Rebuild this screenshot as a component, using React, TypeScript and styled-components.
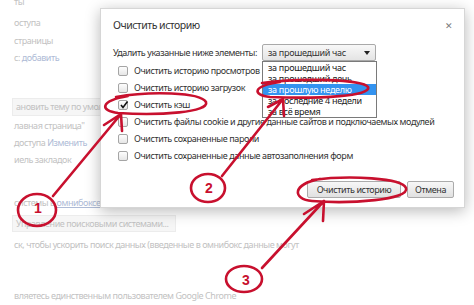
import styled, { createGlobalStyle } from "styled-components";

const GlobalStyle = createGlobalStyle`
  html, body {
    margin: 0;
    padding: 0;
    background: #fff;
    overflow: hidden;
  }
  body {
    font-family: "Noto Sans", "Open Sans", sans-serif;
  }
`;

const RED = "#c8102e";

const Page = styled.div`
  position: relative;
  width: 474px;
  height: 305px;
  overflow: hidden;
  background: #fff;
`;

const Settings = styled.div`
  display: flex;
  flex-direction: column;
  padding-left: 14px;
  font-size: 9px;
  letter-spacing: -0.45px;
  color: #c2c2c2;
  white-space: nowrap;
`;

const Line = styled.div<{ $top: number }>`
  height: 14px;
  line-height: 14px;
  margin-top: ${(p) => p.$top}px;
`;

const Link = styled.span<{ $underline?: boolean }>`
  color: #aebbd6;
  text-decoration: ${(p) => (p.$underline ? "underline" : "none")};
`;

const GhostButton = styled.div<{ $top: number; $width: number; $height: number }>`
  margin-top: ${(p) => p.$top}px;
  margin-left: -2px;
  width: ${(p) => p.$width}px;
  height: ${(p) => p.$height}px;
  line-height: ${(p) => p.$height - 2}px;
  padding-left: 3px;
  box-sizing: border-box;
  background: #f6f6f6;
  border: 1px solid #ececec;
`;

const Dialog = styled.div`
  position: absolute;
  left: 100px;
  top: 8px;
  width: 365px;
  height: 200px;
  box-sizing: border-box;
  background: #fff;
  border: 1px solid #d6d6d6;
  box-shadow: 0 3px 14px rgba(0, 0, 0, 0.28);
  padding: 7px 10px 9px 12px;
  display: flex;
  flex-direction: column;
  color: #333;
  letter-spacing: -0.4px;
`;

const Header = styled.div`
  display: flex;
  justify-content: space-between;
  align-items: center;
  height: 18px;
`;

const Title = styled.div`
  font-size: 10.5px;
  letter-spacing: -0.5px;
  color: #333;
`;

const Close = styled.div`
  font-size: 9px;
  color: #7a7a7a;
  margin-right: 1px;
`;

const RangeRow = styled.div`
  display: flex;
  align-items: center;
  margin-top: 10px;
  font-size: 9px;
  gap: 5px;
`;

const SelectWrap = styled.div`
  position: relative;
`;

const Select = styled.div`
  width: 114px;
  height: 17px;
  box-sizing: border-box;
  border: 1px solid #a9a9a9;
  border-radius: 2px;
  background: linear-gradient(#f8f8f8, #e4e4e4);
  display: flex;
  align-items: center;
  justify-content: space-between;
  padding: 0 5px;
  font-size: 9px;
  letter-spacing: -0.3px;
`;

const Caret = styled.span`
  width: 0;
  height: 0;
  border-left: 3.5px solid transparent;
  border-right: 3.5px solid transparent;
  border-top: 4px solid #222;
`;

const Menu = styled.div`
  position: absolute;
  left: 0;
  top: 17px;
  width: 115px;
  box-sizing: border-box;
  border: 1px solid #7a7a7a;
  background: #fff;
  z-index: 2;
`;

const MenuItem = styled.div<{ $active?: boolean }>`
  height: 11px;
  line-height: 11px;
  padding-left: 5px;
  font-size: 9px;
  letter-spacing: -0.3px;
  color: ${(p) => (p.$active ? "#fff" : "#222")};
  background: ${(p) => (p.$active ? "#3393f0" : "transparent")};
`;

const Options = styled.div`
  display: flex;
  flex-direction: column;
  margin-top: 1px;
  margin-left: 5px;
`;

const Option = styled.div`
  display: flex;
  align-items: center;
  height: 17px;
  gap: 6px;
  font-size: 9px;
  white-space: nowrap;
`;

const Box = styled.span`
  position: relative;
  flex: none;
  width: 10px;
  height: 10px;
  box-sizing: border-box;
  border: 1px solid #a5a5a5;
  border-radius: 2px;
  background: linear-gradient(#fdfdfd, #e6e6e6);
`;

const Tick = styled.svg`
  position: absolute;
  left: 0;
  top: -1px;
`;

const Footer = styled.div`
  margin-top: auto;
  display: flex;
  justify-content: flex-end;
  gap: 6px;
`;

const Button = styled.div<{ $width: number }>`
  width: ${(p) => p.$width}px;
  height: 17px;
  box-sizing: border-box;
  border: 1px solid #ababab;
  border-radius: 2px;
  background: linear-gradient(#f7f7f7, #e1e1e1);
  font-size: 9px;
  display: flex;
  align-items: center;
  justify-content: center;
  color: #333;
`;

const Marks = styled.svg`
  position: absolute;
  inset: 0;
  pointer-events: none;
  z-index: 5;
`;

const options = [
  "Очистить историю просмотров",
  "Очистить историю загрузок",
  "Очистить кэш",
  "Очистить файлы cookie и другие данные сайтов и подключаемых модулей",
  "Очистить сохраненные пароли",
  "Очистить сохраненные данные автозаполнения форм",
];

const ranges = [
  "за прошедший час",
  "за прошедший день",
  "за прошлую неделю",
  "за последние 4 недели",
  "за всё время",
];

function Annotations() {
  const s = {
    fill: "none",
    stroke: RED,
    strokeWidth: 2.6,
    strokeLinecap: "round" as const,
    strokeLinejoin: "round" as const,
  };
  return (
    <Marks width="474" height="305" viewBox="0 0 474 305">
      {/* loop round "кэш" */}
      <path d="M116 97 C150 91 200 92 206 102 C210 112 160 116 118 113 C100 111 99 101 128 96" {...s} />
      {/* loop round "неделю" */}
      <path d="M262 83 C300 78 362 79 368 87 C372 96 320 99 270 97 C252 95 252 86 280 82" {...s} />
      {/* loop round the button */}
      <path d="M312 180 C350 175 402 178 406 188 C410 200 350 204 312 201 C292 199 292 184 320 179" {...s} />

      <ellipse cx="37" cy="210" rx="19" ry="16" {...s} />
      <ellipse cx="208" cy="188" rx="17" ry="14" {...s} />
      <ellipse cx="244" cy="279" rx="18" ry="13" {...s} />

      <text x="38" y="213" fill={RED} fontSize="14" fontWeight="700" textAnchor="middle" fontFamily="Liberation Sans, sans-serif">1</text>
      <text x="209" y="193" fill={RED} fontSize="14" fontWeight="700" textAnchor="middle" fontFamily="Liberation Sans, sans-serif">2</text>
      <text x="246" y="285" fill={RED} fontSize="14" fontWeight="700" textAnchor="middle" fontFamily="Liberation Sans, sans-serif">3</text>

      <path d="M53 196 L121 114 M121 114 L104 125 M121 114 L122 131" {...s} />
      <path d="M222 176 L283 99 M283 99 L268 107 M283 99 L284 116" {...s} />
      <path d="M262 268 L324 201 M324 201 L304 214 M324 201 L323 221" {...s} />
    </Marks>
  );
}

export default function App() {
  return (
    <Page>
      <GlobalStyle />
      <Settings>
        <Line $top={-5}>ты</Line>
        <Line $top={7}>оступа</Line>
        <Line $top={4}>страницы</Line>
        <Line $top={3}>
          с:  <Link>добавить</Link>
        </Line>
        <GhostButton $top={33} $width={100} $height={18}>
          ановить тему по умолчанию
        </GhostButton>
        <Line $top={3}>лавная страница"</Line>
        <Line $top={3}>
          доступа  <Link>Изменить</Link>
        </Line>
        <Line $top={3}>иель закладок</Line>
        <Line $top={29}>
          системы в <Link $underline>омнибоксе</Link>
        </Line>
        <GhostButton $top={5} $width={164} $height={17}>
          Управление поисковыми системами...
        </GhostButton>
        <Line $top={6}>ск, чтобы ускорить поиск данных (введенные в омнибокс данные могут</Line>
        <Line $top={37}>вляетесь единственным пользователем Google Chrome</Line>
      </Settings>

      <Dialog>
        <Header>
          <Title>Очистить историю</Title>
          <Close>✕</Close>
        </Header>
        <RangeRow>
          <span>Удалить указанные ниже элементы:</span>
          <SelectWrap>
            <Select>
              <span>за прошедший час</span>
              <Caret />
            </Select>
            <Menu>
              {ranges.map((r, i) => (
                <MenuItem key={r} $active={i === 2}>
                  {r}
                </MenuItem>
              ))}
            </Menu>
          </SelectWrap>
        </RangeRow>
        <Options>
          {options.map((o, i) => (
            <Option key={o}>
              <Box>
                {i === 2 && (
                  <Tick width="10" height="10" viewBox="0 0 10 10">
                    <path d="M2 5 L4 7.5 L8.5 1.5" fill="none" stroke="#111" strokeWidth="1.6" />
                  </Tick>
                )}
              </Box>
              <span>{o}</span>
            </Option>
          ))}
        </Options>
        <Footer>
          <Button $width={94}>Очистить историю</Button>
          <Button $width={47}>Отмена</Button>
        </Footer>
      </Dialog>

      <Annotations />
    </Page>
  );
}
